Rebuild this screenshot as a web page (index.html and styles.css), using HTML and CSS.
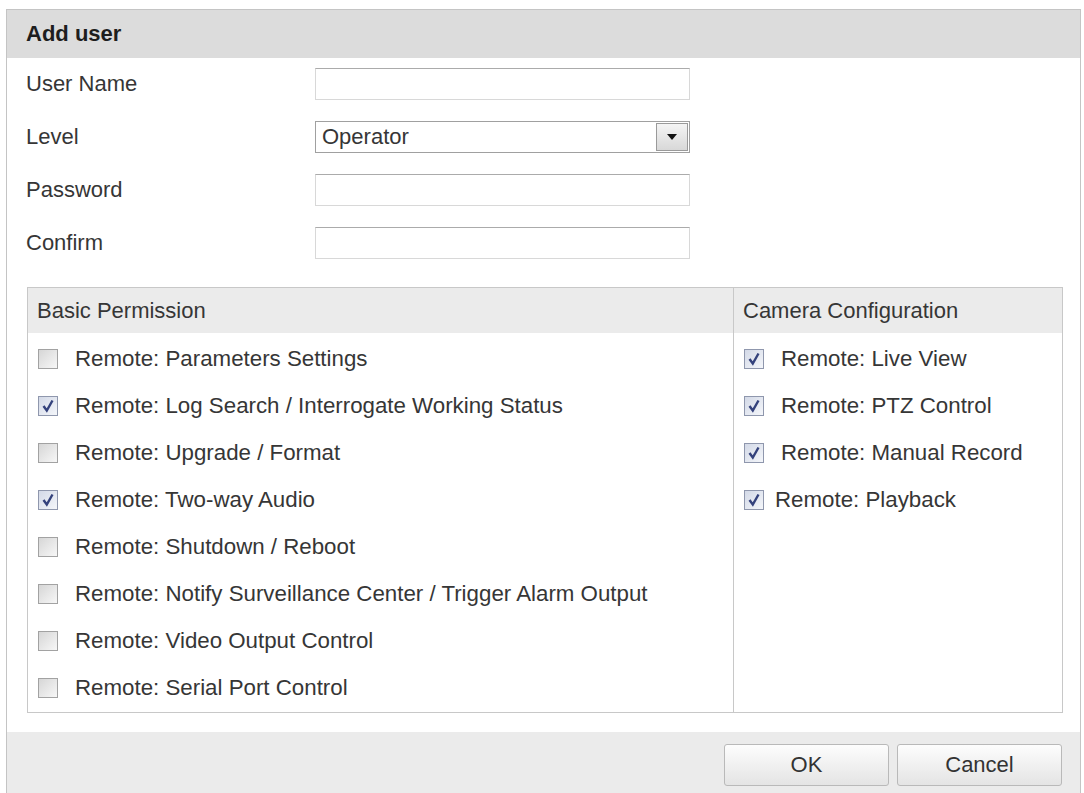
FILE: index.html
```html
<!DOCTYPE html>
<html lang="en">
<head>
    <meta charset="UTF-8">
    <meta name="viewport" content="width=device-width, initial-scale=1.0">
    <title>Add user</title>
    <link rel="stylesheet" href="styles.css">
</head>
<body>
    <div class="dialog">
        <div class="dialog-title">Add user</div>

        <form class="user-form" id="addUserForm">
            <label for="userName">User Name</label>
            <input type="text" id="userName" class="text-field">

            <label>Level</label>
            <div class="select-box">
                <span class="select-value">Operator</span>
                <span class="select-btn">
                    <svg width="10" height="6" viewBox="0 0 10 6"><path d="M0 0 H10 L5 6 Z" fill="#111"/></svg>
                </span>
            </div>

            <label for="password">Password</label>
            <input type="password" id="password" class="text-field">

            <label for="confirm">Confirm</label>
            <input type="password" id="confirm" class="text-field">
        </form>

        <section class="perm-table">
            <div class="perm-col perm-basic">
                <div class="perm-head">Basic Permission</div>
                <ul class="perm-list">
                    <li><span class="cb"></span>Remote: Parameters Settings</li>
                    <li><span class="cb checked"><svg viewBox="0 0 18 18"><path d="M4.5 9 L7.8 13.5 L13.5 3.5"/></svg></span>Remote: Log Search / Interrogate Working Status</li>
                    <li><span class="cb"></span>Remote: Upgrade / Format</li>
                    <li><span class="cb checked"><svg viewBox="0 0 18 18"><path d="M4.5 9 L7.8 13.5 L13.5 3.5"/></svg></span>Remote: Two-way Audio</li>
                    <li><span class="cb"></span>Remote: Shutdown / Reboot</li>
                    <li><span class="cb"></span>Remote: Notify Surveillance Center / Trigger Alarm Output</li>
                    <li><span class="cb"></span>Remote: Video Output Control</li>
                    <li><span class="cb"></span>Remote: Serial Port Control</li>
                </ul>
            </div>
            <div class="perm-col perm-camera">
                <div class="perm-head">Camera Configuration</div>
                <ul class="perm-list">
                    <li><span class="cb checked"><svg viewBox="0 0 18 18"><path d="M4.5 9 L7.8 13.5 L13.5 3.5"/></svg></span>Remote: Live View</li>
                    <li><span class="cb checked"><svg viewBox="0 0 18 18"><path d="M4.5 9 L7.8 13.5 L13.5 3.5"/></svg></span>Remote: PTZ Control</li>
                    <li><span class="cb checked"><svg viewBox="0 0 18 18"><path d="M4.5 9 L7.8 13.5 L13.5 3.5"/></svg></span>Remote: Manual Record</li>
                    <li class="tight"><span class="cb checked"><svg viewBox="0 0 18 18"><path d="M4.5 9 L7.8 13.5 L13.5 3.5"/></svg></span>Remote: Playback</li>
                </ul>
            </div>
        </section>

        <div class="dialog-footer">
            <button type="button" class="btn">OK</button>
            <button type="button" class="btn">Cancel</button>
        </div>
    </div>
</body>
</html>
```

FILE: styles.css
```css
body {
    margin: 0;
    background: #fff;
    font-family: "Liberation Sans", Arial, sans-serif;
    font-size: 22px;
    color: #363636;
    overflow: hidden;
}

.dialog {
    margin: 9px 0 0 6px;
    width: 1073px;
    border: 1px solid #c4c4c4;
}

.dialog-title {
    height: 48px;
    line-height: 48px;
    padding-left: 19px;
    background-color: #dcdcdc;
    font-weight: bold;
    color: #1e1e1e;
}

/* user fields */
.user-form {
    display: grid;
    grid-template-columns: 289px 375px;
    row-gap: 21px;
    align-items: center;
    padding: 10px 0 0 19px;
}

.text-field {
    box-sizing: border-box;
    height: 32px;
    width: 375px;
    margin: 0;
    border: 1px solid #d8d8d8;
    border-top-color: #ababab;
    background: #fff;
    font: inherit;
}

.select-box {
    box-sizing: border-box;
    display: flex;
    height: 32px;
    border: 1px solid #a0a0a0;
    background: #fff;
}

.select-value {
    flex: 1;
    padding-left: 6px;
    line-height: 30px;
}

.select-btn {
    display: flex;
    align-items: center;
    justify-content: center;
    width: 30px;
    margin: 1px;
    border: 1px solid #9a9a9a;
    background: linear-gradient(#f4f4f4, #d8d8d8);
}

/* permission table */
.perm-table {
    display: flex;
    margin: 28px 17px 0 20px;
    border: 1px solid #c8c8c8;
    font-size: 22.3px;
}

.perm-basic {
    width: 705px;
}

.perm-camera {
    flex: 1;
    border-left: 1px solid #c8c8c8;
}

.perm-head {
    height: 45px;
    line-height: 45px;
    padding-left: 9px;
    background-color: #ebebeb;
    font-size: 22px;
}

.perm-list {
    list-style: none;
    margin: 0;
    padding: 2px 0 1px 0;
}

.perm-list li {
    display: flex;
    align-items: center;
    height: 47px;
    padding-left: 10px;
}

.perm-list li .cb {
    margin-right: 17px;
}

.perm-list li.tight .cb {
    margin-right: 11px;
}

.cb {
    box-sizing: border-box;
    flex: none;
    width: 20px;
    height: 20px;
    border: 1px solid #a2a2a2;
    background: linear-gradient(135deg, #d6d6d6, #f7f7f7);
}

.cb.checked {
    border-color: #8f97ad;
    background: linear-gradient(135deg, #d3d9e7, #f4f6fa);
}

.cb svg {
    display: block;
    width: 18px;
    height: 18px;
}

.cb svg path {
    fill: none;
    stroke: #34427c;
    stroke-width: 2.4;
}

/* footer buttons */
.dialog-footer {
    display: flex;
    justify-content: flex-end;
    gap: 8px;
    margin-top: 19px;
    padding: 12px 18px 14px 0;
    background-color: #ebebeb;
}

.btn {
    width: 165px;
    height: 42px;
    border: 1px solid #b9b9b9;
    border-radius: 3px;
    background: linear-gradient(#fdfdfd, #e4e4e4);
    font: inherit;
    color: #333;
    cursor: pointer;
}
```
